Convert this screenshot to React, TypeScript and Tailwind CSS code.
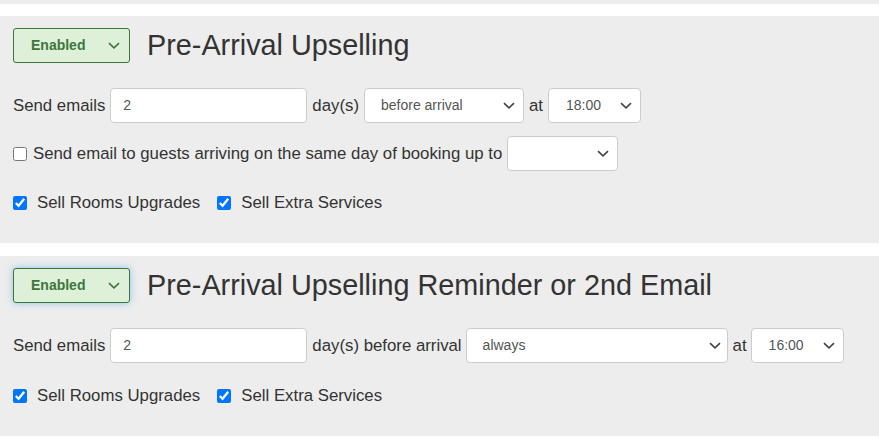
import React from "react";

function Chevron({ className = "" }: { className?: string }) {
  return (
    <svg width="12" height="7" viewBox="0 0 12 7" className={className} fill="none">
      <path d="M1 1.2 L6 5.8 L11 1.2" stroke="currentColor" strokeWidth="1.6" />
    </svg>
  );
}

function StatusSelect({ focused }: { focused?: boolean }) {
  return (
    <div
      className={`flex items-center justify-between w-[117px] h-[35px] pl-[17px] pr-[9px] rounded-[3px] border border-[#3c763d] bg-[#dff0d8] text-[#3c763d] text-[14px] font-bold ${
        focused ? "shadow-[0_0_7px_rgba(102,175,233,0.7)]" : ""
      }`}
    >
      <span>Enabled</span>
      <Chevron className="text-[#3c763d]" />
    </div>
  );
}

function Select({ value, width, pl = 16, pr = 8 }: { value: string; width: string; pl?: number; pr?: number }) {
  return (
    <div
      className={`flex items-center justify-between ${width} h-[35px] rounded-[4px] border border-[#ccc] bg-white text-[14px] text-[#555]`}
      style={{ paddingLeft: pl, paddingRight: pr }}
    >
      <span>{value}</span>
      <Chevron className="text-[#444]" />
    </div>
  );
}

function NumberInput() {
  return (
    <div className="flex items-center w-[197px] h-[35px] rounded-[4px] border border-[#ccc] bg-white pl-[12px] text-[14px] text-[#555]">
      2
    </div>
  );
}

function Check({ label, checked }: { label: string; checked?: boolean }) {
  return (
    <label className="flex items-center">
      <input type="checkbox" defaultChecked={checked} className="w-[14px] h-[14px] m-0 accent-[#0075ff]" />
      <span className="ml-[10px]">{label}</span>
    </label>
  );
}

function Upsells() {
  return (
    <div className="flex items-center h-[20px]">
      <Check label="Sell Rooms Upgrades" checked />
      <div className="ml-[17px]">
        <Check label="Sell Extra Services" checked />
      </div>
    </div>
  );
}

export default function App() {
  return (
    <div className="w-[879px] h-[440px] overflow-hidden bg-white text-[#333] text-[16.8px] font-['Liberation_Sans',Arial,sans-serif]">
      <div className="h-[4px] bg-[#ededed]" />

      <section className="mt-[12px] h-[227px] bg-[#ededed] px-[13px] pt-[12px]">
        <div className="flex items-center">
          <StatusSelect />
          <h2 className="ml-[17px] text-[28.8px] leading-none text-[#333]">Pre-Arrival Upselling</h2>
        </div>

        <div className="mt-[25px] flex items-center h-[35px]">
          <span>Send emails</span>
          <div className="ml-[5px]">
            <NumberInput />
          </div>
          <span className="ml-[5px]">day(s)</span>
          <div className="ml-[5px]">
            <Select value="before arrival" width="w-[160px]" />
          </div>
          <span className="ml-[5px]">at</span>
          <div className="ml-[5px]">
            <Select value="18:00" width="w-[93px]" pl={17} />
          </div>
        </div>

        <div className="mt-[13px] flex items-center h-[35px]">
          <input type="checkbox" className="w-[14px] h-[14px] m-0" />
          <span className="ml-[6px]">Send email to guests arriving on the same day of booking up to</span>
          <div className="ml-[5px]">
            <Select value="" width="w-[111px]" />
          </div>
        </div>

        <div className="mt-[22px]">
          <Upsells />
        </div>
      </section>

      <section className="mt-[13px] h-[180px] bg-[#ededed] px-[13px] pt-[12px]">
        <div className="flex items-center">
          <StatusSelect focused />
          <h2 className="ml-[17px] text-[28.8px] leading-none text-[#333]">
            Pre-Arrival Upselling Reminder or 2nd Email
          </h2>
        </div>

        <div className="mt-[25px] flex items-center h-[35px]">
          <span>Send emails</span>
          <div className="ml-[5px]">
            <NumberInput />
          </div>
          <span className="ml-[5px]">day(s) before arrival</span>
          <div className="ml-[4px]">
            <Select value="always" width="w-[262px]" pr={6} />
          </div>
          <span className="ml-[5px]">at</span>
          <div className="ml-[4px]">
            <Select value="16:00" width="w-[93px]" pl={17} />
          </div>
        </div>

        <div className="mt-[23px]">
          <Upsells />
        </div>
      </section>
    </div>
  );
}
